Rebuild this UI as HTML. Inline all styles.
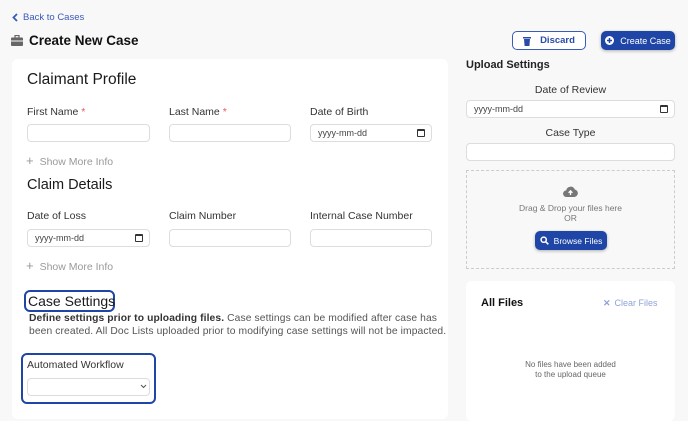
<!DOCTYPE html>
<html><head><style>
*{margin:0;padding:0;box-sizing:border-box}
body{width:688px;height:414px;background:#f8f8f8;font-family:"Liberation Sans",sans-serif;color:#222;position:relative;overflow:hidden}
.a{position:absolute;white-space:nowrap}
.lbl{font-size:10.5px;color:#333;height:14px;line-height:14px}
.inp{position:absolute;height:18px;background:#fff;border:1px solid #ddd;border-radius:4px;font-size:9px;color:#444;padding-left:7px;line-height:16px}
.cal{position:absolute;right:6px;top:4px;width:8px;height:8px;border:1.3px solid #333;border-top-width:2.5px;border-radius:1px}
.h2{font-size:15px;color:#1a1a1a;height:20px;line-height:20px}
.more{font-size:10.5px;color:#999;height:14px;line-height:14px}
.btn{position:absolute;display:flex;align-items:center;justify-content:center;gap:6px;border-radius:5px}
</style></head><body>
<svg class="a" style="left:11px;top:13px" width="8" height="9" viewBox="0 0 8 9"><path d="M6 1L2.5 4.5L6 8" stroke="#3a5bb8" stroke-width="1.8" fill="none"/></svg>
<div class="a" style="left:23px;top:11px;font-size:9.5px;color:#3a5bb8;line-height:14px">Back to Cases</div>
<svg class="a" style="left:11px;top:35px" width="12" height="11" viewBox="0 0 12 11"><rect x="4" y="0.5" width="4" height="2.5" fill="none" stroke="#666" stroke-width="1.2"/><rect x="0" y="2.5" width="12" height="8.5" rx="1" fill="#666"/><rect x="0" y="5.5" width="12" height="1" fill="#f8f8f8"/></svg>
<div class="a" style="left:29px;top:32px;font-size:13.5px;font-weight:bold;line-height:17px;color:#111">Create New Case</div>

<div class="btn" style="left:512px;top:31px;width:74px;height:19px;border:1.3px solid #3a5bb8;background:#fff;font-size:9.5px;font-weight:bold;color:#2a4aa8;gap:9px">
<svg width="8" height="10" viewBox="0 0 8 10"><rect x="0" y="1" width="8" height="1.5" fill="#2a4aa8"/><path d="M1 3h6l-.6 7H1.6z" fill="#2a4aa8"/></svg><span>Discard</span></div>
<div class="btn" style="left:601px;top:31px;width:74px;height:19px;background:#1f46a6;font-size:9px;color:#fff;box-shadow:0 1px 3px rgba(0,0,0,.3)">
<svg width="9" height="9" viewBox="0 0 9 9"><circle cx="4.5" cy="4.5" r="4.5" fill="#fff"/><path d="M4.5 2v5M2 4.5h5" stroke="#1f46a6" stroke-width="1.5"/></svg><span>Create Case</span></div>

<div class="a" style="left:12px;top:59px;width:436px;height:360px;background:#fff;border-radius:6px"></div>
<div class="a h2" style="left:27px;top:70px;font-size:15.5px">Claimant Profile</div>
<div class="a lbl" style="left:27px;top:105px">First Name <span style="color:#e55">*</span></div>
<div class="a lbl" style="left:169px;top:105px">Last Name <span style="color:#e55">*</span></div>
<div class="a lbl" style="left:310px;top:105px">Date of Birth</div>
<div class="inp" style="left:27px;top:124px;width:123px"></div>
<div class="inp" style="left:169px;top:124px;width:122px"></div>
<div class="inp" style="left:310px;top:124px;width:122px">yyyy-mm-dd<span class="cal"></span></div>
<div class="a more" style="left:26px;top:154px"><span style="font-size:13px;margin-right:6px">+</span>Show More Info</div>
<div class="a h2" style="left:27px;top:175px;font-size:14.5px">Claim Details</div>
<div class="a lbl" style="left:27px;top:209px">Date of Loss</div>
<div class="a lbl" style="left:169px;top:209px">Claim Number</div>
<div class="a lbl" style="left:310px;top:209px">Internal Case Number</div>
<div class="inp" style="left:27px;top:229px;width:123px">yyyy-mm-dd<span class="cal"></span></div>
<div class="inp" style="left:169px;top:229px;width:122px"></div>
<div class="inp" style="left:310px;top:229px;width:122px"></div>
<div class="a more" style="left:26px;top:259px"><span style="font-size:13px;margin-right:6px">+</span>Show More Info</div>

<div class="a" style="left:24px;top:290px;width:91px;height:22px;border:2px solid #1f46a6;border-radius:6px"></div>
<div class="a h2" style="left:28px;top:291px;font-size:14px">Case Settings</div>
<div class="a" style="left:29px;top:312px;font-size:10.3px;color:#555;line-height:13px;white-space:normal;width:425px;letter-spacing:0.1px"><b style="color:#333">Define settings prior to uploading files.</b> Case settings can be modified after case has been created. All Doc Lists uploaded prior to modifying case settings will not be impacted.</div>
<div class="a" style="left:21px;top:353px;width:135px;height:51px;border:2px solid #1f46a6;border-radius:6px"></div>
<div class="a lbl" style="left:27px;top:358px">Automated Workflow</div>
<div class="inp" style="left:27px;top:378px;width:123px"></div>
<svg class="a" style="left:140px;top:384px" width="7" height="5" viewBox="0 0 7 5"><path d="M1 1l2.5 2.5L6 1" stroke="#555" stroke-width="1" fill="none"/></svg>

<div class="a" style="left:466px;top:58px;font-size:11px;font-weight:bold;color:#222;line-height:14px">Upload Settings</div>
<div class="a lbl" style="left:466px;width:209px;text-align:center;top:83px">Date of Review</div>
<div class="inp" style="left:466px;top:100px;width:209px">yyyy-mm-dd<span class="cal"></span></div>
<div class="a lbl" style="left:466px;width:209px;text-align:center;top:126px">Case Type</div>
<div class="inp" style="left:466px;top:143px;width:209px"></div>
<div class="a" style="left:466px;top:170px;width:209px;height:99px;border:1px dashed #ccc"></div>
<svg class="a" style="left:563px;top:186px" width="15" height="11" viewBox="0 0 15 11"><path d="M3.5 11a3.3 3.3 0 0 1-.3-6.6A4.5 4.5 0 0 1 11.8 3.5 3.8 3.8 0 0 1 11.5 11z" fill="#777"/><path d="M7.5 9V5M5.6 6.8L7.5 4.8 9.4 6.8" stroke="#fff" stroke-width="1.3" fill="none"/></svg>
<div class="a" style="left:466px;width:209px;text-align:center;top:203px;font-size:8.5px;color:#777;line-height:10px">Drag &amp; Drop your files here<br>OR</div>
<div class="btn" style="left:535px;top:231px;width:72px;height:19px;background:#1f46a6;color:#fff;font-size:8.5px;box-shadow:0 1px 3px rgba(0,0,0,.3);gap:5px">
<svg width="9" height="9" viewBox="0 0 9 9"><circle cx="3.7" cy="3.7" r="2.6" stroke="#fff" stroke-width="1.5" fill="none"/><path d="M5.6 5.6L8.3 8.3" stroke="#fff" stroke-width="1.6"/></svg><span>Browse Files</span></div>

<div class="a" style="left:466px;top:281px;width:209px;height:140px;background:#fff;border-radius:6px"></div>
<div class="a" style="left:481px;top:296px;font-size:11px;font-weight:bold;color:#111;line-height:14px">All Files</div>
<div class="a" style="left:603px;top:296px;font-size:9px;color:#8fa3d8;line-height:14px"><span style="font-weight:bold;margin-right:4px">✕</span>Clear Files</div>
<div class="a" style="left:466px;width:209px;text-align:center;top:360px;font-size:8px;color:#666;line-height:10px">No files have been added<br>to the upload queue</div>
</body></html>
